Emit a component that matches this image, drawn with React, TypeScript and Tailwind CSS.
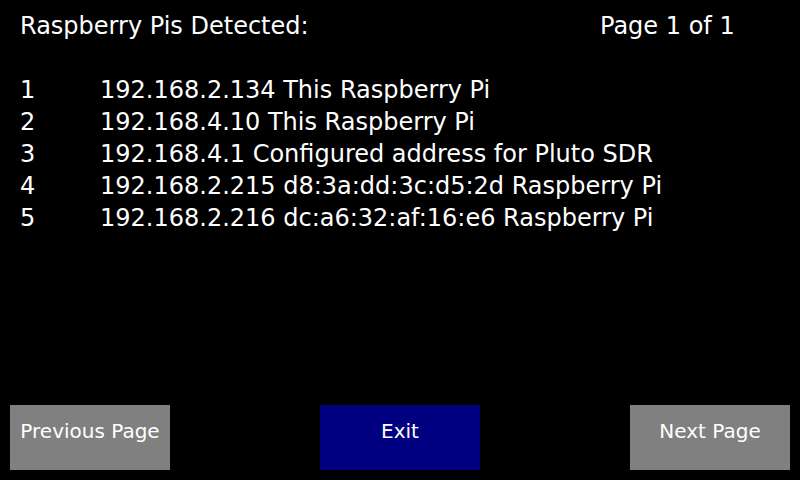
import React from "react";

const devices = [
  { n: 1, text: "192.168.2.134 This Raspberry Pi" },
  { n: 2, text: "192.168.4.10 This Raspberry Pi" },
  { n: 3, text: "192.168.4.1 Configured address for Pluto SDR" },
  { n: 4, text: "192.168.2.215 d8:3a:dd:3c:d5:2d Raspberry Pi" },
  { n: 5, text: "192.168.2.216 dc:a6:32:af:16:e6 Raspberry Pi" },
];

function Btn({ label, blue }: { label: string; blue?: boolean }) {
  return (
    <button
      className={
        "w-[160px] h-[65px] pt-[14px] text-[20px] leading-[24px] text-white text-center flex justify-center items-start " +
        (blue ? "bg-[#000080]" : "bg-[#808080]")
      }
    >
      {label}
    </button>
  );
}

export default function App() {
  return (
    <div
      className="w-[800px] h-[480px] bg-black text-white flex flex-col overflow-hidden"
      style={{ fontFamily: '"DejaVu Sans", sans-serif' }}
    >
      {/* header */}
      <div className="flex pl-[20px] pt-[10px] text-[24px] leading-[32px]">
        <span className="w-[580px]">Raspberry Pis Detected:</span>
        <span>Page 1 of 1</span>
      </div>

      {/* list */}
      <div className="flex flex-col pl-[20px] mt-[32px] text-[24px] leading-[32px]">
        {devices.map((d) => (
          <div key={d.n} className="flex">
            <span className="w-[80px]">{d.n}</span>
            <span>{d.text}</span>
          </div>
        ))}
      </div>

      {/* buttons */}
      <div className="mt-auto flex justify-between px-[10px] pb-[10px]">
        <Btn label="Previous Page" />
        <Btn label="Exit" blue />
        <Btn label="Next Page" />
      </div>
    </div>
  );
}
